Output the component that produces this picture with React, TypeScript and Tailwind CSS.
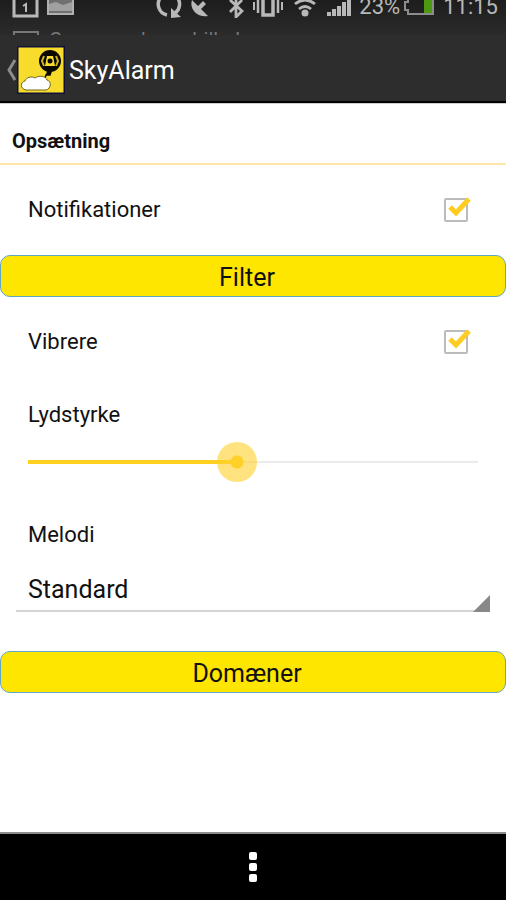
import React, { useState } from 'react';

interface CheckRowProps {
  id: string;
  label: string;
  checked: boolean;
  onChange: (checked: boolean) => void;
}

function CheckRow({ id, label, checked, onChange }: CheckRowProps) {
  return (
    <div className="flex h-[90px] items-center justify-between pr-[38px] pl-7">
      <label htmlFor={id} className="text-[22px] leading-7">
        {label}
      </label>
      <div className="relative h-6 w-6">
        <input
          id={id}
          type="checkbox"
          checked={checked}
          onChange={(e) => onChange(e.target.checked)}
          className="peer block h-6 w-6 appearance-none rounded-xs border-2 border-[#bcbcbc] bg-white"
        />
        <svg
          viewBox="0 0 28 28"
          className="pointer-events-none invisible absolute -top-1 left-0 h-7 w-7 peer-checked:visible"
        >
          <path d="M6 13 L12 19 L25 5" fill="none" stroke="#ffcc22" strokeWidth="5" />
        </svg>
      </div>
    </div>
  );
}

function WideButton({ children }: { children: React.ReactNode }) {
  return (
    <button
      type="button"
      className="block h-[42px] w-full rounded-[10px] border border-[#5fa6c4] bg-[#ffe600] pt-1 pr-3 text-[25px] leading-8"
    >
      {children}
    </button>
  );
}

function StatusBar() {
  return (
    <div className="flex h-[35px] flex-col justify-between overflow-hidden bg-gradient-to-b from-[#1d1d1d] to-[#2b2b2b]">
      <div className="flex h-[18px] items-end justify-between overflow-hidden pr-2 pl-3 text-[#b8b8b8]">
        <div className="flex items-end gap-2">
          <svg viewBox="0 0 27 18" className="h-[18px] w-[27px]" fill="none" stroke="currentColor">
            <path d="M2 -6 V16 H25 V-6" strokeWidth="3" />
            <path d="M11 6 L14 4 V12" strokeWidth="2" />
          </svg>
          <svg viewBox="0 0 27 18" className="h-[18px] w-[27px]">
            <rect x="0" y="-6" width="27" height="21" fill="#b0b0b0" />
            <rect x="2" y="-4" width="23" height="17" fill="#707070" />
            <path d="M2 4 L9 2 L16 5 L25 2 V11 H2 Z" fill="#a0a0a0" />
          </svg>
        </div>
        <div className="flex items-end">
          <svg viewBox="0 0 26 18" className="mr-2 h-[18px] w-[26px]" fill="none" stroke="currentColor" strokeWidth="3.5">
            <path d="M5 -3 A11 11 0 0 0 11 15" />
            <path d="M21 -3 A11 11 0 0 1 19 13" />
            <path d="M15 8 V18 L25 17 Z" fill="currentColor" stroke="none" />
          </svg>
          <svg viewBox="0 0 19 18" className="mr-[19px] h-[18px] w-[19px]" fill="currentColor">
            <path d="M2 0 C-1 9 7 18 18 16 L11 9 L16 4 L13 1 L8 6 Z" />
          </svg>
          <svg viewBox="0 0 16 18" className="mr-2 h-[18px] w-4" fill="none" stroke="currentColor" strokeWidth="2.8">
            <path d="M2 12 L14 0 M2 0 L14 11 L8 17 V-4" />
          </svg>
          <svg viewBox="0 0 32 18" className="mr-2.5 h-[18px] w-8" fill="none" stroke="currentColor">
            <path d="M11 -4 V15 H21 V-4" strokeWidth="3.5" />
            <path d="M6 -2 V13 M26 -2 V13" strokeWidth="2.5" />
            <path d="M2 2 V10 M30 2 V10" strokeWidth="2" />
          </svg>
          <svg viewBox="0 0 22 18" className="mr-[11px] h-[18px] w-[22px]" fill="none" stroke="currentColor" strokeWidth="2.8">
            <path d="M1 4 Q11 -4 21 4 M5 9 Q11 4 17 9" />
            <circle cx="11" cy="13" r="3.5" fill="currentColor" stroke="none" />
          </svg>
          <svg viewBox="0 0 24 18" className="mr-2 h-[18px] w-6" fill="currentColor">
            <path d="M0 12h4v4H0z M5 9h4v7H5z M10 6h4v10h-4z M15 2h4v14h-4z M20 -2h4v18h-4z" />
          </svg>
          <span className="text-[22px] leading-[22px]">23%</span>
          <svg viewBox="0 0 31 18" className="mr-2 ml-1 h-[18px] w-[31px]">
            <path d="M4 -3 V2 H1 V10 H4 V14 H29 V-3" fill="none" stroke="#8c8c8c" strokeWidth="2" />
            <rect x="20" y="-3" width="8" height="16" fill="#4d9a12" />
          </svg>
          <span className="text-[22px] leading-[22px]">11:15</span>
        </div>
      </div>
      {/* Outgoing notification ticker, only the letter tops are still in view */}
      <div className="flex h-[7px] gap-2.5 overflow-hidden pl-3 text-[#777777]">
        <svg viewBox="0 0 27 7" className="h-[7px] w-[27px] shrink-0">
          <path d="M2 7 V4 H26 V7" fill="none" stroke="currentColor" strokeWidth="2" />
        </svg>
        <span className="text-xl leading-6">Gemmer skærmbillede</span>
      </div>
    </div>
  );
}

function AppLogo() {
  return (
    <svg viewBox="0 0 48 48" className="h-12 w-12">
      <rect width="48" height="48" fill="#10103a" />
      <rect x="1.5" y="1.5" width="45" height="45" fill="#f8dc2c" />
      <circle cx="33" cy="15" r="11" fill="#0c0a00" />
      {/* Record label and the grooves beside it */}
      <path d="M30 10 H36 L38 20 H28 Z" fill="#f8dc2c" />
      <circle cx="33" cy="15" r="2.5" fill="#0c0a00" />
      <path d="M27 10 L25 15 L27 20 M39 10 L41 15 L39 20" fill="none" stroke="#cdb420" strokeWidth="2" />
      <path d="M30 25 L34 26 L33 29 L29 29 L28 32" fill="#0c0a00" stroke="#0c0a00" strokeWidth="1.5" />
      <path
        d="M9 44 C3 43 3 36 8 35 C9 31 15 30 18 32 C22 29 29 30 30 34 C35 35 34 43 29 44 Z"
        fill="#ffffff"
        stroke="#6f6420"
        strokeWidth="1"
      />
    </svg>
  );
}

export default function App() {
  const [notifications, setNotifications] = useState(true);
  const [vibrate, setVibrate] = useState(true);
  const [volume, setVolume] = useState(46);
  const [melody, setMelody] = useState('Standard');

  // The filled part ends under the middle of the 40px thumb
  const trackSize = `calc(20px + (100% - 40px) * ${volume / 100}) 4px, 100% 2px`;

  return (
    <div className="flex min-h-screen flex-col bg-white font-['Roboto',sans-serif] text-[#111111]">
      <StatusBar />

      <header className="flex h-[68px] items-center border-b-2 border-black bg-[#2d2d2d] pt-1 pl-1.5">
        <button type="button" aria-label="Tilbage" className="flex items-center">
          <svg viewBox="0 0 11 24" className="h-6 w-[11px]">
            <path d="M9 2 L3 12 L9 22" fill="none" stroke="#8c8c8c" strokeWidth="3" />
          </svg>
          <AppLogo />
        </button>
        <h1 className="mt-0.5 ml-1 text-[25px] leading-8 text-white">SkyAlarm</h1>
      </header>

      <main>
        <h2 className="flex h-[62px] items-center border-t border-b-2 border-t-[#cccccc] border-b-[#ffe6a8] px-3 pt-3.5 text-xl leading-6 font-bold">
          Opsætning
        </h2>

        <CheckRow id="notifications" label="Notifikationer" checked={notifications} onChange={setNotifications} />
        <WideButton>Filter</WideButton>
        <CheckRow id="vibrate" label="Vibrere" checked={vibrate} onChange={setVibrate} />

        <div className="px-7">
          <label htmlFor="volume" className="flex h-[55px] items-center text-[22px] leading-7">
            Lydstyrke
          </label>
          <input
            id="volume"
            type="range"
            min={0}
            max={100}
            value={volume}
            onChange={(e) => setVolume(Number(e.target.value))}
            style={{ backgroundSize: trackSize }}
            className="block h-10 w-full appearance-none bg-[linear-gradient(#ffd020,#ffd020),linear-gradient(#ebebeb,#ebebeb)] bg-left bg-no-repeat [&::-webkit-slider-thumb]:h-10 [&::-webkit-slider-thumb]:w-10 [&::-webkit-slider-thumb]:appearance-none [&::-webkit-slider-thumb]:rounded-full [&::-webkit-slider-thumb]:bg-[radial-gradient(circle,#ffd028_6px,#ffd02899_7px)]"
          />
          <label htmlFor="melody" className="mt-[26px] flex h-[54px] items-center text-[22px] leading-7">
            Melodi
          </label>
        </div>

        <div className="relative mx-4 mt-2 mb-[39px]">
          <select
            id="melody"
            value={melody}
            onChange={(e) => setMelody(e.target.value)}
            className="block h-[42px] w-full appearance-none border-b-2 border-[#d4d4d4] bg-transparent pl-3 text-[25px] leading-8"
          >
            <option>Standard</option>
            <option>Alarm</option>
          </select>
          <svg viewBox="0 0 17 17" className="pointer-events-none absolute right-0 bottom-0 h-[17px] w-[17px]">
            <path d="M17 0 V17 H0 Z" fill="#888888" />
          </svg>
        </div>

        <WideButton>Domæner</WideButton>
      </main>

      <footer className="mt-auto flex h-[68px] items-center justify-center border-t-2 border-[#8c8c8c] bg-black">
        <button type="button" aria-label="Menu" className="flex flex-col gap-[3px] p-2">
          <span className="h-2 w-2 rounded-xs bg-white" />
          <span className="h-2 w-2 rounded-xs bg-white" />
          <span className="h-2 w-2 rounded-xs bg-white" />
        </button>
      </footer>
    </div>
  );
}
